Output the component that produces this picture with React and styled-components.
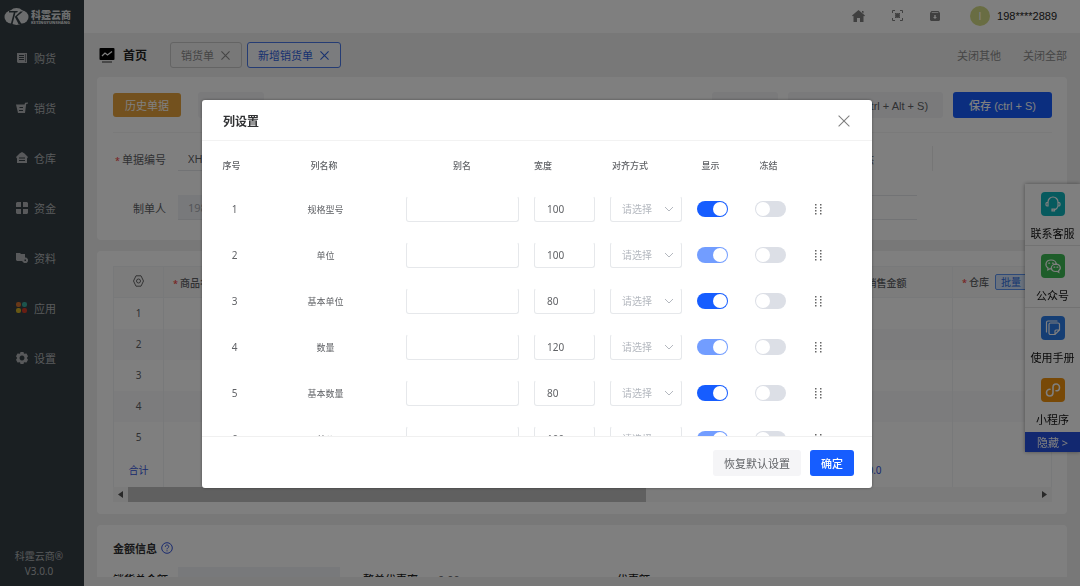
/**
*
* App
*
*/

import React from 'react';
import styled, { createGlobalStyle } from 'styled-components';

const GlobalStyle = createGlobalStyle`
  * {
    box-sizing: border-box;
  }

  body {
    margin: 0;
    font-family: "Noto Sans", "Noto Sans CJK SC", sans-serif;
    font-size: 11px;
    color: #606266;
    background: #f0f0f0;
  }

  button, input, select {
    font-family: inherit;
    font-size: inherit;
  }
`;

const Layout = styled.div`
  display: flex;
  height: 100vh;
  overflow: hidden;
`;

const Sidebar = styled.aside`
  flex: none;
  width: 84px;
  display: flex;
  flex-direction: column;
  background: #353f45;
`;

const LogoLink = styled.a`
  display: flex;
  align-items: center;
  gap: 2px;
  height: 33px;
  padding-left: 4px;
  color: #d8dadc;
  text-decoration: none;
`;

const LogoText = styled.span`
  display: flex;
  flex-direction: column;
  padding-top: 2px;
  font-size: 10px;
  font-weight: 900;
  line-height: 11px;
`;

const LogoSub = styled.small`
  font-size: 4px;
  line-height: 4px;
`;

const Menu = styled.nav`
  flex: 1;
  display: flex;
  flex-direction: column;
`;

const MenuItem = styled.a`
  display: flex;
  align-items: center;
  gap: 6px;
  height: 50px;
  padding-left: 16px;
  color: #b0b3b6;
  text-decoration: none;
`;

const Version = styled.div`
  padding: 0 6px 7px 0;
  text-align: center;
  font-size: 10px;
  line-height: 15px;
  color: #b0b3b6;
`;

const Main = styled.main`
  flex: 1;
  min-width: 0;
  display: flex;
  flex-direction: column;
  padding-bottom: 9px;
`;

const Header = styled.header`
  flex: none;
  display: flex;
  align-items: center;
  justify-content: flex-end;
  gap: 27px;
  height: 33px;
  padding: 0 23px 2px 0;
  background: #fff;
`;

const IconButton = styled.button`
  display: flex;
  padding: 0;
  border: 0;
  background: none;
  color: #808080;
  cursor: pointer;
`;

const User = styled.div`
  display: flex;
  align-items: center;
  gap: 7px;
  padding-left: 3px;
  color: #222;
  font-family: "Liberation Sans", sans-serif;
`;

const Avatar = styled.span`
  width: 20px;
  border-radius: 50%;
  background: #d3da86;
  color: #fff;
  line-height: 20px;
  text-align: center;
`;

const TabBar = styled.nav`
  flex: none;
  display: flex;
  align-items: center;
  gap: 5px;
  height: 44px;
  padding: 0 13px 0 15px;
`;

const HomeLink = styled.a`
  display: flex;
  align-items: center;
  gap: 8px;
  margin-right: 18px;
  color: #222;
  font-size: 12px;
  font-weight: 700;
  text-decoration: none;
`;

const Tab = styled.button`
  display: flex;
  align-items: center;
  gap: 7px;
  height: 26px;
  padding: 0 11px 0 10px;
  border: 1px solid ${props => (props.$active ? '#4a78e8' : '#c8c8c8')};
  border-radius: 3px;
  background: ${props => (props.$active ? '#f6f8fc' : 'none')};
  color: ${props => (props.$active ? '#2f62e0' : '#8a8a8a')};
`;

const TabActions = styled.div`
  display: flex;
  gap: 22px;
  margin-left: auto;
`;

const TextButton = styled.button`
  padding: 0;
  border: 0;
  background: none;
  color: #8c8c8c;
`;

const Content = styled.div`
  flex: 1;
  min-height: 0;
  display: flex;
  flex-direction: column;
  gap: 11px;
  padding: 0 13px;
  overflow: hidden;
`;

const Card = styled.section`
  flex: none;
  padding: 15px 15px 12px 16px;
  border-radius: 4px;
  background: #fff;
`;

const Toolbar = styled.div`
  display: flex;
  align-items: center;
  gap: 17px;
  padding-bottom: 14px;
  border-bottom: 1px solid #f4f4f4;
`;

const colors = {
  primary: '#165dff',
  warning: '#e6a23c',
  plain: '#f5f5f7',
};

const Button = styled.button`
  height: ${props => (props.$kind === 'warning' ? 24 : 26)}px;
  padding: 0 ${props => props.$pad || 11}px;
  border: 0;
  border-radius: 3px;
  background: ${props => colors[props.$kind || 'plain']};
  color: ${props => (props.$kind ? '#fff' : '#606266')};
  font-family: "Liberation Sans", "Noto Sans CJK SC", sans-serif;
  font-size: 11px;
  font-weight: ${props => (props.$kind === 'primary' ? 500 : 400)};
  cursor: pointer;
`;

const ToolbarEnd = styled.div`
  display: flex;
  gap: 10px;
  margin-left: auto;
`;

const Form = styled.form`
  display: grid;
  grid-template-columns: 1fr 1fr 1fr 120px;
  column-gap: 15px;
  row-gap: 24px;
  padding: 13px 0 8px;
`;

const Field = styled.label`
  display: flex;
  align-items: center;
  gap: 12px;
`;

const FieldName = styled.span`
  flex: none;
  width: 53px;
  text-align: ${props => props.$align || 'right'};
  white-space: nowrap;
`;

const Status = styled.span`
  align-self: center;
  padding-right: 43px;
  text-align: right;
`;

const Divider = styled.span`
  border-left: 1px solid #ececec;
`;

const Required = styled.span`
  margin-right: 2px;
  color: #f04040;
  font-size: 9px;
`;

const Input = styled.input`
  flex: 1;
  min-width: 0;
  width: 100%;
  height: 25px;
  padding: 0 10px;
  border: 0 solid #e4e6ea;
  border-width: ${props => (props.$boxed ? '1px 0' : '0 0 1px')};
  background: none;
  color: #606266;

  &:disabled {
    background: #f1f3f7;
    color: #a8abb2;
  }
`;

const GoodsTable = styled.table`
  width: 100%;
  table-layout: fixed;
  border-collapse: collapse;
  font-size: 10px;

  th, td {
    height: 31px;
    padding: 0 9px;
    border: 1px solid #f0f2f5;
    border-width: 0 1px;
    font-weight: 400;
    text-align: center;
    white-space: nowrap;
    overflow: hidden;
  }

  th {
    border-width: 1px;
    background: #f8f8f9;
    font-weight: 500;
  }

  tbody tr:nth-child(even) {
    background: #f9f9fa;
  }

  tfoot td {
    height: 34px;
    color: #3355dd;
  }
`;

const HeadLeft = styled.th`
  && {
    text-align: left;
  }
`;

const AmountSum = styled.td`
  && {
    padding-right: 33px;
  }
`;

const BatchButton = styled.button`
  height: 16px;
  margin-left: 6px;
  padding: 0 5px;
  border: 1px solid #5a93f0;
  border-radius: 2px;
  background: #d5e4fc;
  color: #2a6be0;
  font-size: 10px;
  line-height: 14px;
`;

const ScrollTrack = styled.div`
  display: flex;
  align-items: center;
  gap: 5px;
  height: 15px;
  padding: 0 5px;
  background: #f6f6f6;
  color: #505050;
`;

const ScrollLane = styled.div`
  flex: 1;
  height: 15px;
`;

const ScrollThumb = styled.div`
  width: 57%;
  height: 15px;
  background: #c1c1c1;
`;

const SectionTitle = styled.h2`
  display: flex;
  align-items: center;
  gap: 4px;
  margin: 0 0 10px;
  color: #303133;
  font-size: 11px;
  line-height: 17px;
`;

const AmountRow = styled.div`
  display: grid;
  grid-template-columns: 227px 231px 1fr;
  column-gap: 23px;
`;

const AmountField = styled(Field)`
  color: #222;
  font-weight: 500;

  input {
    border: 0;
    font-weight: 400;
  }
`;

const SidePanel = styled.aside`
  position: fixed;
  top: 184px;
  right: 0;
  width: 55px;
  background: #fff;
  box-shadow: 0 0 4px rgba(0, 0, 0, .4);
`;

const SideLink = styled.a`
  display: flex;
  flex-direction: column;
  align-items: center;
  gap: 8px;
  height: 62px;
  padding-top: 8px;
  border-bottom: ${props => (props.$line ? '1px solid #e4e4e4' : '0')};
  color: #111;
  font-size: 11px;
  line-height: 20px;
  text-decoration: none;
`;

const SideIcon = styled.span`
  display: flex;
  align-items: center;
  justify-content: center;
  width: 24px;
  height: 24px;
  border-radius: 4px;
  background: ${props => props.color};
`;

const HideButton = styled.button`
  width: 100%;
  height: 20px;
  padding: 0;
  border: 0;
  background: #2450e0;
  color: #fff;
`;

const Overlay = styled.div`
  position: fixed;
  inset: 0;
  display: flex;
  align-items: flex-start;
  justify-content: center;
  padding: 100px 6px 0 0;
  background: rgba(0, 0, 0, .5);
`;

const Dialog = styled.div`
  width: 100%;
  max-width: 670px;
  border-radius: 3px;
  background: #fff;
  box-shadow: 0 0 3px rgba(0, 0, 0, .4);
`;

const DialogHeader = styled.header`
  display: flex;
  align-items: center;
  justify-content: space-between;
  height: 41px;
  padding: 1px 22px 0 21px;
  border-bottom: 1px solid #f2f2f2;
`;

const DialogTitle = styled.h1`
  margin: 0;
  color: #303133;
  font-size: 12px;
  font-weight: 700;
`;

const DialogBody = styled.div`
  height: calc(100vh - 291px);
  padding: 0 36px 0 20px;
  overflow-y: auto;
  scrollbar-width: none;
`;

const DialogFooter = styled.footer`
  display: flex;
  justify-content: flex-end;
  gap: 9px;
  padding: 13px 18px 12px;
  border-top: 1px solid #f0f0f0;
`;

const ColumnTable = styled.table`
  width: 100%;
  table-layout: fixed;
  border-collapse: collapse;
  font-size: 10px;

  th, td {
    height: 46px;
    padding: 0;
    font-weight: 400;
    text-align: center;
    white-space: nowrap;
  }

  th {
    height: 45px;
    padding-top: 3px;
    font-size: 9px;
    font-weight: 500;
  }
`;

const Head = styled.th`
  && {
    padding-left: ${props => props.$left || 0}px;
    padding-right: ${props => props.$right || 0}px;
    text-align: ${props => (props.$left ? 'left' : 'center')};
  }
`;

const NameCell = styled.td`
  font-size: 9px;
`;

const ControlCell = styled.td`
  && {
    padding: 0 ${props => props.$right || 0}px 0 ${props => props.$left || 0}px;
    vertical-align: middle;
  }
`;

const BoxInput = styled.input`
  display: block;
  width: 100%;
  height: 26px;
  padding: 0 12px;
  border: 1px solid #e6e8eb;
  border-top-color: #fff;
  border-radius: 3px;
  background: #fff;
  color: #606266;
`;

const SelectBox = styled.span`
  display: grid;
  align-items: center;

  > * {
    grid-area: 1 / 1;
  }

  > svg {
    justify-self: end;
    margin-right: 8px;
    pointer-events: none;
  }
`;

const Select = styled.select`
  appearance: none;
  width: 100%;
  height: 26px;
  padding: 0 20px 0 11px;
  border: 1px solid #e6e8eb;
  border-top-color: #fff;
  border-radius: 3px;
  background: #fff;
  color: #b4b8bf;
`;

const Switch = styled.input`
  appearance: none;
  display: block;
  width: 31px;
  height: 16px;
  margin: 0 auto;
  padding: 1px;
  border-radius: 8px;
  background: ${props => (props.checked ? '#165dff' : '#dcdfe6')};
  opacity: ${props => (props.checked && props.disabled ? .6 : 1)};

  &::before {
    content: "";
    display: block;
    width: 14px;
    height: 14px;
    margin-left: ${props => (props.checked ? 15 : 0)}px;
    border-radius: 50%;
    background: #fff;
  }
`;

const DragButton = styled(IconButton)`
  margin: 0 auto;
  cursor: move;
`;

const menu = [
  { label: '购货', icon: <path d="M1 1h10v10H2L1 10zM3 3v1h5V3zM3 5v1h5V5zM3 7v1h5V7zM9 2v8h.6V2z" fillRule="evenodd" /> },
  { label: '销货', icon: <path d="M0 2.500h8.500l.6-1.700L12 .5l.2 1-2 .4L9 11H2zM3 5l1 1h3V5zM3 8v1h4V8z" fillRule="evenodd" /> },
  { label: '仓库', icon: <path d="M6 0l2.500 1.500L12 5 11 6.500V11H1V6.500L0 5l3.500-3.500zM3 5.500v1h6v-1zM3 8v1h6V8z" fillRule="evenodd" /> },
  { label: '资金', icon: <path d="M1 0h4v5H0V1zM7 0h4l1 1v4H7zM0 7h5v5H1l-1-1zM7 7h5v4l-1 1H7z" /> },
  { label: '资料', icon: <path d="M0 1h4l1 1h4v3.500a2.800 2.800 0 0 1 2.500 4.500l-1 1H8L6 9H1L0 8zM8.500 7.500v1.500h1.500V7.500z" fillRule="evenodd" /> },
  {
    label: '应用',
    icon: (
      <g>
        <rect x="0" y="0" width="5" height="5" rx="2" fill="#d07030" />
        <rect x="6" y="0" width="5" height="5" rx="2" fill="#38a89a" />
        <rect x="0" y="6" width="5" height="5" rx="2" fill="#d0b028" />
        <rect x="6" y="6" width="5" height="5" rx="2" fill="#d03a28" />
      </g>
    ),
  },
  { label: '设置', icon: <path d="M4.500 0h3l.5 1.700L10.500 1.500 12 4.200 10.800 6 12 7.800l-1.500 2.700L8 10.300 7.500 12h-3L4 10.300l-2.500.2L0 7.800 1.200 6 0 4.200 1.500 1.500 4 1.700zM6 3.500a2.500 2.500 0 1 0 .01 0z" fillRule="evenodd" /> },
];

const columns = [
  { name: '规格型号', width: 100, locked: false },
  { name: '单位', width: 100, locked: true },
  { name: '基本单位', width: 80, locked: false },
  { name: '数量', width: 120, locked: true },
  { name: '基本数量', width: 80, locked: false },
  { name: '单价', width: 100, locked: true },
];

const sideLinks = [
  {
    label: '联系客服',
    color: '#0fb5bd',
    line: true,
    icon: <path d="M4 8.500V7a5 5 0 0 1 10 0v1.500M4 7.500H3a1.200 1.200 0 0 0-1 1.200v1.100A1.200 1.200 0 0 0 3 11h1zM14 7.500h1a1.200 1.200 0 0 1 1 1.200v1.100a1.200 1.200 0 0 1-1 1.200h-1zM14 11a5 5 0 0 1-3.500 3.800M8 14.200h2.500v1.600H8z" />,
  },
  {
    label: '公众号',
    color: '#3cba54',
    line: true,
    icon: <path d="M8 12l-2-.3L3.800 13l.2-2.100C.5 8.500 1.500 3 7 3c3 0 5 1.800 5.300 4M4.800 6.200h.8M8.500 6.200h.8M12 7.200c-3 0-4.700 1.900-4.700 3.800S9.200 14.500 12 14.500l1-.2 1.800 1-.2-1.600c3.400-2.300 1.200-6.500-2.600-6.500zM10 10.200h.8M13 10.200h.8" />,
  },
  {
    label: '使用手册',
    color: '#2b7de9',
    icon: <path d="M5 5.500A1.500 1.500 0 0 1 6.500 4H14a1.500 1.500 0 0 1 1.500 1.500V11L11 15.500H6.500A1.500 1.500 0 0 1 5 14zM11 15.500V12a1 1 0 0 1 1-1h3.500M2.500 13V3.500a1.500 1.500 0 0 1 1.500-1.500h9" />,
  },
  {
    label: '小程序',
    color: '#f0920e',
    icon: <path d="M6 8.200C4 8.200 2.500 9.800 2.500 11.600 2.500 13.500 4 15 5.900 15S9 13.500 9 11.600V6.400C9 4.500 10.300 3 12.100 3s3.400 1.500 3.400 3.400S14 9.800 12 9.800" strokeWidth="1.600" />,
  },
];

function Cross({ size = 9 }) {
  return (
    <svg width={size} height={size} viewBox="0 0 10 10" fill="none" stroke="currentColor" strokeWidth={size > 10 ? 0.9 : 1.2}>
      <path d="M.5.5l9 9M9.500.5l-9 9" />
    </svg>
  );
}

function Logo() {
  return (
    <LogoLink href="#home">
      <svg width="25" height="19" viewBox="0 0 25 19">
        <circle cx="7" cy="10" r="6.500" fill="#d8dadc" />
        <circle cx="18" cy="10" r="6.500" fill="#d8dadc" />
        <circle cx="12.500" cy="9.500" r="8.500" fill="#d8dadc" />
        <path d="M5 4h9l-1 1.500h-1.500L8.500 17H6.800l3-11.500H5zM19 4.500l-6 5L17.500 17h-3L10.800 9.800l5.700-5.300z" fill="#353f45" />
      </svg>
      <LogoText>
        科霆云商
        <LogoSub>KETINGYUNSHANG</LogoSub>
      </LogoText>
    </LogoLink>
  );
}

function ColumnRow({ column, index }) {
  const { name, width, locked } = column;

  return (
    <tr>
      <td>{index + 1}</td>
      <NameCell>{name}</NameCell>
      <ControlCell $left={2} $right={1}><BoxInput aria-label={`${name} 别名`} /></ControlCell>
      <ControlCell $left={14} $right={7}><BoxInput aria-label={`${name} 宽度`} defaultValue={width} /></ControlCell>
      <ControlCell $left={8} $right={2}>
        <SelectBox>
          <Select aria-label={`${name} 对齐方式`}>
            <option>请选择</option>
          </Select>
          <svg width="10" height="6" viewBox="0 0 10 6" fill="none" stroke="#b4b8bf"><path d="M1 1l4 4 4-4" /></svg>
        </SelectBox>
      </ControlCell>
      <ControlCell><Switch type="checkbox" aria-label={`${name} 显示`} checked readOnly disabled={locked} /></ControlCell>
      <ControlCell><Switch type="checkbox" aria-label={`${name} 冻结`} checked={false} readOnly /></ControlCell>
      <ControlCell>
        <DragButton type="button" aria-label={`移动 ${name}`}>
          <svg width="8" height="13" viewBox="0 0 8 13" fill="#666">
            {[1, 4, 7, 10].map(y => (
              <React.Fragment key={y}>
                <rect x="1" y={y} width="1.500" height="1.500" />
                <rect x="6" y={y} width="1.500" height="1.500" />
              </React.Fragment>
            ))}
          </svg>
        </DragButton>
      </ControlCell>
    </tr>
  );
}

function ColumnDialog() {
  return (
    <Overlay>
      <Dialog role="dialog" aria-labelledby="dialogTitle">
        <DialogHeader>
          <DialogTitle id="dialogTitle">列设置</DialogTitle>
          <IconButton type="button" aria-label="关闭"><Cross size={12} /></IconButton>
        </DialogHeader>
        <DialogBody>
          <ColumnTable>
            <colgroup>
              <col width="25" />
              <col />
              <col width="116" />
              <col width="82" />
              <col width="82" />
              <col width="56" />
              <col width="60" />
              <col width="36" />
            </colgroup>
            <thead>
              <tr>
                <Head $right={6}>序号</Head>
                <Head $right={3}>列名称</Head>
                <Head>别名</Head>
                <Head $left={14}>宽度</Head>
                <Head $left={10}>对齐方式</Head>
                <Head $right={3}>显示</Head>
                <Head $right={3}>冻结</Head>
                <Head aria-label="移动" />
              </tr>
            </thead>
            <tbody>
              {columns.map((column, index) => <ColumnRow key={column.name} column={column} index={index} />)}
            </tbody>
          </ColumnTable>
        </DialogBody>
        <DialogFooter>
          <Button type="button">恢复默认设置</Button>
          <Button type="button" $kind="primary">确定</Button>
        </DialogFooter>
      </Dialog>
    </Overlay>
  );
}

function App() {
  return (
    <Layout>
      <GlobalStyle />
      <Sidebar>
        <Logo />
        <Menu>
          {menu.map(({ label, icon }) => (
            <MenuItem key={label} href="#menu">
              <svg width="12" height="12" viewBox="0 0 12 12" fill="currentColor">{icon}</svg>
              {label}
            </MenuItem>
          ))}
        </Menu>
        <Version>科霆云商®<br />V3.0.0</Version>
      </Sidebar>
      <Main>
        <Header>
          <IconButton type="button" aria-label="主页">
            <svg width="13" height="12" viewBox="0 0 13 12" fill="currentColor"><path d="M6.500 0l6.500 5.500-.7.8L11.500 6v6H8V8H5v4H1.500V6l-.8.3L0 5.500zM10 1h1.500v2.500L10 2.200z" /></svg>
          </IconButton>
          <IconButton type="button" aria-label="全屏">
            <svg width="11" height="11" viewBox="0 0 11 11" fill="none" stroke="currentColor"><path d="M.5 3V.5H3M8 .5h2.500V3M.5 8v2.500H3M8 10.500h2.500V8M3 3l5 5M8 3L3 8" /><circle cx="5.500" cy="5.500" r="2" fill="currentColor" /></svg>
          </IconButton>
          <IconButton type="button" aria-label="归档">
            <svg width="10" height="10" viewBox="0 0 10 10" fill="currentColor"><path d="M1.500 0h7L10 2v7L9 10H1L0 9V2zM1.500 2h7l-.5-.8H2zM4.300 4v2H3l2 2 2-2H5.700V4z" fillRule="evenodd" /></svg>
          </IconButton>
          <User><Avatar>I</Avatar>198****2889</User>
        </Header>
        <TabBar>
          <HomeLink href="#home">
            <svg width="16" height="15" viewBox="0 0 16 15"><rect width="15" height="12" x=".5" fill="#000" rx="1" /><path d="M3 8l3-3 2.500 2L13 3.500" fill="none" stroke="#fff" strokeWidth="1.300" /><path d="M3 14h10" stroke="#333" /></svg>
            首页
          </HomeLink>
          <Tab type="button">销货单 <Cross /></Tab>
          <Tab type="button" $active>新增销货单 <Cross /></Tab>
          <TabActions>
            <TextButton type="button">关闭其他</TextButton>
            <TextButton type="button">关闭全部</TextButton>
          </TabActions>
        </TabBar>
        <Content>
          <Card>
            <Toolbar>
              <Button type="button" $kind="warning" $pad={12}>历史单据</Button>
              <Button type="button">操作日志</Button>
              <ToolbarEnd>
                <Button type="button">批量导入</Button>
                <Button type="button" $pad={15}>保存并新增 (ctrl + Alt + S)</Button>
                <Button type="button" $kind="primary" $pad={16}>保存 (ctrl + S)</Button>
              </ToolbarEnd>
            </Toolbar>
            <Form>
              <Field><FieldName><Required>*</Required>单据编号</FieldName><Input defaultValue="XH" /></Field>
              <Field><FieldName>单据日期</FieldName><Input /></Field>
              <Status>单据状态</Status>
              <Divider />
              <Field><FieldName>制单人</FieldName><Input disabled defaultValue="198****2889" /></Field>
              <Field><FieldName>销售人员</FieldName><Input /></Field>
              <Field><FieldName>备注</FieldName><Input $boxed /></Field>
            </Form>
          </Card>
          <Card>
            <GoodsTable>
              <colgroup>
                <col width="50" />
                <col width="220" />
                <col />
                <col width="132" />
                <col width="99" />
              </colgroup>
              <thead>
                <tr>
                  <th aria-label="列设置">
                    <svg width="11" height="12" viewBox="0 0 11 12" fill="none" stroke="#666"><path d="M3 .8h5L10.500 6 8 11.200H3L.5 6z" /><circle cx="5.500" cy="6" r="2" /></svg>
                  </th>
                  <HeadLeft><Required>*</Required>商品名称</HeadLeft>
                  <th>数量</th>
                  <th>销售金额</th>
                  <HeadLeft><Required>*</Required>仓库<BatchButton type="button">批量</BatchButton></HeadLeft>
                </tr>
              </thead>
              <tbody>
                {[1, 2, 3, 4, 5].map(row => (
                  <tr key={row}><td>{row}</td><td /><td /><td /><td /></tr>
                ))}
              </tbody>
              <tfoot>
                <tr><td>合计</td><td /><td /><AmountSum>0.0</AmountSum><td /></tr>
              </tfoot>
            </GoodsTable>
            <ScrollTrack>
              <svg width="5" height="7" viewBox="0 0 5 7"><path d="M5 0v7L0 3.500z" fill="currentColor" /></svg>
              <ScrollLane><ScrollThumb /></ScrollLane>
              <svg width="5" height="7" viewBox="0 0 5 7"><path d="M0 0v7l5-3.500z" fill="currentColor" /></svg>
            </ScrollTrack>
          </Card>
          <Card>
            <SectionTitle>
              金额信息
              <svg width="12" height="12" viewBox="0 0 12 12" fill="none" stroke="#3355dd"><circle cx="6" cy="6" r="5.300" /><path d="M4.300 4.800C4.300 2.400 7.800 2.500 7.700 4.700 7.700 5.800 6 6 6 7.300M6 8.300v1" /></svg>
            </SectionTitle>
            <AmountRow>
              <AmountField><FieldName>销货总金额</FieldName><Input disabled /></AmountField>
              <AmountField><FieldName>整单优惠率</FieldName><Input defaultValue="0.00" /></AmountField>
              <AmountField><FieldName $align="left">优惠额</FieldName><Input /></AmountField>
            </AmountRow>
          </Card>
        </Content>
      </Main>
      <SidePanel>
        {sideLinks.map(({ label, color, line, icon }) => (
          <SideLink key={label} href="#service" $line={line}>
            <SideIcon color={color}>
              <svg width="18" height="18" viewBox="0 0 18 18" fill="none" stroke="#fff" strokeWidth="1.200" strokeLinecap="round">{icon}</svg>
            </SideIcon>
            {label}
          </SideLink>
        ))}
        <HideButton type="button">隐藏 &gt;</HideButton>
      </SidePanel>
      <ColumnDialog />
    </Layout>
  );
}

export default App;
